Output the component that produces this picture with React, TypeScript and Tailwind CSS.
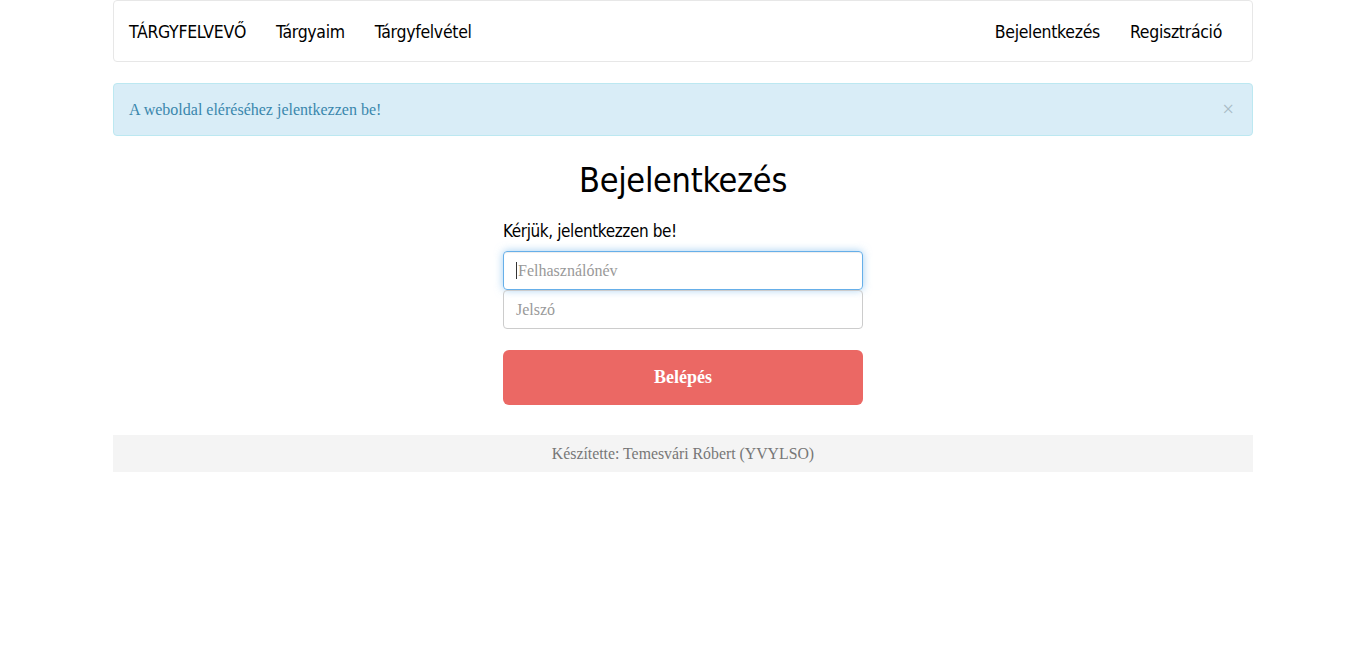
import React from "react";

const HEAD = "font-['Liberation_Sans_Narrow','DejaVu_Sans_Condensed',sans-serif]";
const BODY = "font-['Liberation_Serif','DejaVu_Serif',serif]";

function Navbar() {
  return (
    <nav className={`flex h-[62px] items-center justify-between rounded-[4px] border border-[#e7e7e7] bg-white pl-[15px] pr-[30px] pt-[2px] text-[17.5px] tracking-[-0.3px] text-black ${HEAD}`}>
      <div className="flex items-center">
        <a className="pr-[15px]">TÁRGYFELVEVŐ</a>
        <a className="px-[15px]">Tárgyaim</a>
        <a className="px-[15px]">Tárgyfelvétel</a>
      </div>
      <div className="flex items-center">
        <a className="px-[15px]">Bejelentkezés</a>
        <a className="pl-[15px]">Regisztráció</a>
      </div>
    </nav>
  );
}

export default function App() {
  return (
    <div className={`min-h-[659px] bg-white text-[#222] ${BODY}`}>
      <div className="mx-auto w-[1140px]">
        <Navbar />
        <div className="mt-[21px] flex h-[53px] items-center justify-between rounded-[4px] border border-[#bce8f1] bg-[#d9edf7] pl-[15px] pr-[18px] text-[16px] text-[#3a87ad]">
          <span>A weboldal eléréséhez jelentkezzen be!</span>
          <span className="text-[21px] leading-none text-[#a9bcc6]">×</span>
        </div>
        <div className="mx-auto mt-[24px] w-[360px]">
          <h1 className={`text-center text-[34px] leading-[40px] tracking-[-0.3px] text-black ${HEAD}`}>Bejelentkezés</h1>
          <label className={`mt-[20px] block text-[17px] leading-[22px] tracking-[-0.4px] text-black ${HEAD}`}>Kérjük, jelentkezzen be!</label>
          <div className="mt-[9px] flex flex-col">
            <div className="flex h-[39px] items-center rounded-[4px] border border-[#66afe9] px-[12px] text-[16px] text-[#999] shadow-[inset_0_1px_1px_rgba(0,0,0,0.075),0_0_8px_rgba(102,175,233,0.6)]">
              <span className="mr-[1px] h-[17px] w-px bg-[#333]" />
              <span>Felhasználónév</span>
            </div>
            <div className="flex h-[39px] items-center rounded-[4px] border border-[#ccc] px-[12px] text-[16px] text-[#999]">
              Jelszó
            </div>
          </div>
          <button className="mt-[21px] h-[55px] w-full rounded-[6px] bg-[#eb6864] text-[18px] font-bold text-white">Belépés</button>
        </div>
        <footer className="mt-[30px] flex h-[37px] items-center justify-center bg-[#f4f4f4] text-[15.8px] text-[#777]">
          Készítette: Temesvári Róbert (YVYLSO)
        </footer>
      </div>
    </div>
  );
}
